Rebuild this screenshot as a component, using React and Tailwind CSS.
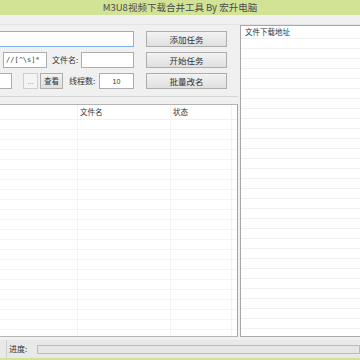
export default function App() {
  const tableRows = Array.from({ length: 22 });
  const rightRows = Array.from({ length: 30 });
  const btn =
    "h-[16px] w-[81px] flex items-center justify-center border border-[#adadad] bg-gradient-to-b from-[#f2f2f2] to-[#e0e0e0] text-[8.5px] text-[#333]";
  const input = "h-[15px] bg-white border border-[#abadb3]";
  return (
    <div className="w-[360px] h-[360px] overflow-hidden bg-[#f0f0f0] flex flex-col font-['Noto_Sans_CJK_SC',sans-serif] leading-none text-[#333]">
      {/* title */}
      <div className="h-[15px] shrink-0 bg-[#d2e396] flex items-center justify-center text-[9.5px] text-[#4b4b4b]">
        M3U8视频下载合并工具 By 宏升电脑
      </div>
      <div className="h-[10px] shrink-0 border-b border-[#e3e3e3]" />
      {/* main */}
      <div className="h-[312px] shrink-0 flex">
        <div className="w-[238px] flex flex-col">
          {/* group */}
          <div className="h-[72px] shrink-0 border-b border-[#d5d5d5] flex pt-[6px]">
            <div className="w-[134px] flex flex-col gap-[5px]">
              <div className="h-[16px] bg-white border border-[#7eb4ea] border-l-0" />
              <div className="h-[16px] flex items-center">
                <div className={`${input} h-[16px] w-[44px] ml-[3px] flex items-center pl-[2px] text-[7px] font-['DejaVu_Sans_Mono',monospace] text-[#444]`}>
                  //[^\s]*
                </div>
                <span className="ml-[5px] text-[8px]">文件名:</span>
                <div className={`${input} h-[16px] w-[53px] ml-auto`} />
              </div>
              <div className="h-[16px] flex items-center">
                <div className={`${input} h-[16px] w-[12px] border-l-0`} />
                <div className="ml-[11px] h-[16px] w-[15px] border border-[#cfcfcf] bg-[#f4f4f4] flex items-center justify-center text-[7px] text-[#999]">
                  ...
                </div>
                <div className="ml-[2px] h-[16px] w-[23px] border border-[#adadad] bg-gradient-to-b from-[#f2f2f2] to-[#e0e0e0] flex items-center justify-center text-[7.5px]">
                  查看
                </div>
                <span className="ml-[6px] text-[8px]">线程数:</span>
                <div className={`${input} h-[16px] w-[35px] ml-auto flex items-center justify-center text-[7px] font-['Liberation_Sans',sans-serif]`}>
                  10
                </div>
              </div>
            </div>
            <div className="ml-[12px] flex flex-col gap-[5px]">
              <div className={btn}>添加任务</div>
              <div className={btn}>开始任务</div>
              <div className={btn}>批量改名</div>
            </div>
          </div>
          <div className="h-[7px] shrink-0" />
          {/* table */}
          <div className="flex-1 min-h-0 bg-white border-t border-b border-[#b5b5b5] border-r border-r-[#a5a5a5] flex flex-col overflow-hidden">
            <div className="h-[15px] shrink-0 flex border-b border-[#f0f0f0] text-[7.5px] text-[#333]">
              <div className="w-[78px] border-r border-[#f2f2f2]" />
              <div className="w-[93px] border-r border-[#f2f2f2] flex items-center pl-[2px]">文件名</div>
              <div className="w-[61px] border-r border-[#f2f2f2] flex items-center pl-[2px]">状态</div>
            </div>
            {tableRows.map((_, i) => (
              <div key={i} className="h-[10px] shrink-0 flex border-b border-[#f3f3f3]">
                <div className="w-[78px] border-r border-[#f3f3f3]" />
                <div className="w-[93px] border-r border-[#f3f3f3]" />
                <div className="w-[61px] border-r border-[#f3f3f3]" />
              </div>
            ))}
          </div>
        </div>
        <div className="w-[2px]" />
        {/* right panel */}
        <div className="flex-1 bg-white border-l border-t border-b border-[#a8a8a8] flex flex-col overflow-hidden">
          <div className="h-[13px] shrink-0 border-b border-[#f0f0f0] flex items-center pl-[4px] text-[7.5px]">
            文件下载地址
          </div>
          {rightRows.map((_, i) => (
            <div key={i} className="h-[10px] shrink-0 border-b border-[#f0f0f0]" />
          ))}
        </div>
      </div>
      {/* status */}
      <div className="h-[3px] shrink-0" />
      <div className="h-[18px] shrink-0 bg-[#e9e9e9] flex items-center">
        <div className="w-[7px] h-full border-r border-[#cfcfcf]" />
        <span className="ml-[2px] text-[8px] text-[#333]">进度:</span>
        <div className="ml-[10px] flex-1 h-[9px] border border-[#bcbcbc] bg-[#e6e6e6]" />
      </div>
      <div className="flex-1 bg-[#d2e396]" />
    </div>
  );
}
